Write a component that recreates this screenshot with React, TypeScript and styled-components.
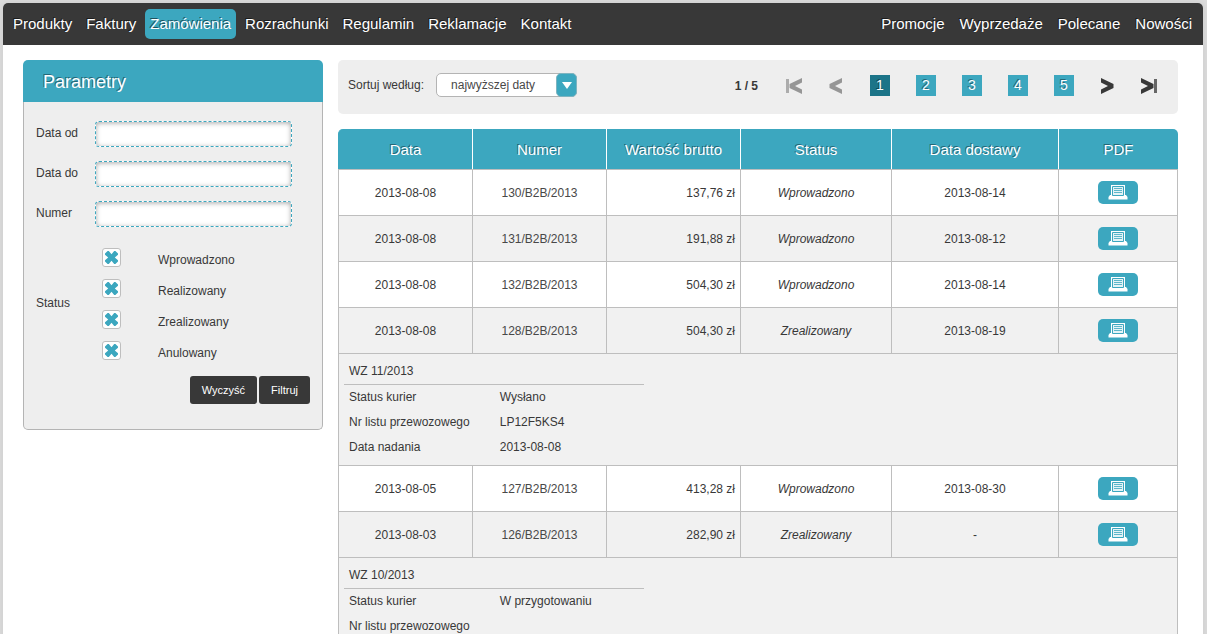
import React from "react";
import styled, { createGlobalStyle, css } from "styled-components";

const teal = "#3ca7bf";
const dark = "#383838";
const line = "#bebebe";

const GlobalStyle = createGlobalStyle`
  *, *::before, *::after { box-sizing: border-box; }
  html { scrollbar-width: none; }
  body {
    margin: 0;
    background: #dcdcdc;
    color: #383838;
    font-family: "Liberation Sans", Arial, sans-serif;
    font-size: 12px;
    line-height: 16px;
  }
  button, input, select { font: inherit; }
`;

const Page = styled.div`
  min-height: 100vh;
  padding: 3px 4px 0 3px;
  display: flex;
`;

const Sheet = styled.div`
  flex: 1;
  min-width: 0;
  background: #fff;
  border-radius: 5px 5px 0 0;
  box-shadow: 0 0 8px rgba(0, 0, 0, 0.08);
`;

const TopBar = styled.nav`
  display: flex;
  justify-content: space-between;
  align-items: center;
  height: 42px;
  padding: 0 6px 0 5px;
  background: ${dark};
  border-radius: 5px 5px 0 0;
`;

const MenuList = styled.ul<{ $gap: number }>`
  display: flex;
  gap: ${(p) => p.$gap}px;
  margin: 0;
  padding: 0;
  list-style: none;
`;

const MenuLink = styled.a<{ $active?: boolean }>`
  display: block;
  padding: 0 5px;
  border-radius: 5px;
  color: #fff;
  font-size: 15px;
  line-height: 30px;
  text-decoration: none;
  text-shadow: -1px -1px 0 rgba(0, 0, 0, 0.5);
  white-space: nowrap;
  ${(p) => p.$active && css`background: ${teal};`}
`;

const Content = styled.div`
  display: flex;
  align-items: flex-start;
  gap: 15px;
  padding: 15px 25px 0 20px;
`;

const Panel = styled.form`
  flex: none;
  width: 300px;
`;

const PanelTitle = styled.h2`
  margin: 0;
  padding: 2px 20px 0;
  background: ${teal};
  border-radius: 5px 5px 0 0;
  color: #fff;
  font-size: 18px;
  font-weight: normal;
  line-height: 40px;
  text-shadow: -1px -1px 0 rgba(0, 0, 0, 0.4);
`;

const PanelBody = styled.div`
  padding: 19px 12px 25px;
  background: #eee;
  border: 1px solid #b4b4b4;
  border-top: 0;
  border-radius: 0 0 5px 5px;
`;

const Field = styled.div`
  display: flex;
  height: 40px;
  align-items: flex-start;
`;

const FieldLabel = styled.label`
  width: 59px;
  line-height: 24px;
`;

const TextBox = styled.input`
  width: 197px;
  height: 26px;
  padding: 0 6px;
  background: #fff;
  border: 1px dashed ${teal};
  border-radius: 4px;
  box-shadow: inset 0 1px 5px rgba(0, 0, 0, 0.35);
  outline: none;
`;

const StatusGroup = styled.div`
  display: flex;
  align-items: center;
  padding-top: 7px;
`;

const StatusLabel = styled.span`
  width: 66px;
  padding-bottom: 14px;
`;

const StatusOptions = styled.div`
  flex: 1;
`;

const Option = styled.label`
  display: flex;
  align-items: flex-start;
  gap: 37px;
  height: 31px;
  line-height: 24px;
`;

const Tick = styled.span`
  display: grid;
  width: 19px;
  height: 19px;
  & > * { grid-area: 1 / 1; }
  svg { display: none; place-self: center; pointer-events: none; }
  input:checked + svg { display: block; }
`;

const TickBox = styled.input`
  appearance: none;
  width: 19px;
  height: 19px;
  margin: 0;
  background: #fff;
  border: 1px solid ${line};
  border-radius: 3px;
`;

const Actions = styled.div`
  display: flex;
  justify-content: flex-end;
  gap: 2px;
  padding-top: 4px;
`;

const DarkButton = styled.button`
  height: 28px;
  padding: 0 12px;
  background: ${dark};
  border: 0;
  border-radius: 3px;
  color: #fff;
  font-size: 11px;
`;

const Main = styled.main`
  flex: 1;
  min-width: 0;
`;

const Toolbar = styled.div`
  display: flex;
  align-items: center;
  justify-content: space-between;
  height: 54px;
  margin-bottom: 15px;
  padding: 0 20px 4px 10px;
  background: #eee;
  border-radius: 5px;
`;

const Sort = styled.div`
  display: flex;
  align-items: center;
  gap: 12px;
  line-height: 18px;
`;

const SelectFrame = styled.div`
  display: grid;
  width: 141px;
  height: 24px;
  & > * { grid-area: 1 / 1; }
`;

const Select = styled.select`
  appearance: none;
  width: 100%;
  height: 24px;
  padding: 0 24px 0 14px;
  background: #fff;
  border: 1px solid #b4b4b4;
  border-radius: 5px;
  color: #484848;
`;

const SelectArrow = styled.span`
  justify-self: end;
  align-self: center;
  display: grid;
  place-items: center;
  width: 21px;
  height: 24px;
  background: ${teal};
  border: 1px solid #7db4c0;
  border-radius: 5px;
  pointer-events: none;
`;

const Pager = styled.div`
  display: flex;
  align-items: center;
  padding-top: 1px;
`;

const PageCount = styled.strong`
  margin-right: 27px;
`;

const ArrowButton = styled.button<{ $gap: number }>`
  display: block;
  width: 20px;
  height: 20px;
  margin-right: ${(p) => p.$gap}px;
  padding: 0;
  background: none;
  border: 0;
  color: ${dark};
  &:disabled { color: #969696; }
  svg { display: block; }
`;

const PageList = styled.div`
  display: flex;
  gap: 26px;
  margin-right: 24px;
`;

const PageButton = styled.button<{ $current?: boolean }>`
  width: 20px;
  height: 21px;
  padding: 0;
  background: ${(p) => (p.$current ? "#1c7488" : teal)};
  border: 0;
  color: #fff;
  font-size: 14px;
  line-height: 21px;
  text-shadow: -1px -1px 0 rgba(0, 0, 0, 0.4);
`;

const Orders = styled.table`
  width: 100%;
  table-layout: fixed;
  border-collapse: separate;
  border-spacing: 0;
`;

const HeadCell = styled.th`
  height: 40px;
  padding: 2px 0 0;
  background: ${teal};
  border-left: 1px solid #fff;
  color: #fff;
  font-size: 15px;
  font-weight: normal;
  text-shadow: -1px -1px 0 rgba(0, 0, 0, 0.4);
  &:first-child { border-left-color: ${teal}; border-top-left-radius: 5px; }
  &:last-child { border-top-right-radius: 5px; }
`;

const Row = styled.tr<{ $shaded?: boolean }>`
  background: ${(p) => (p.$shaded ? "#f1f1f1" : "#fff")};
`;

const Cell = styled.td<{ $align?: string; $italic?: boolean }>`
  height: 46px;
  padding: 0 5px;
  border-top: 1px solid ${line};
  border-left: 1px solid ${line};
  text-align: ${(p) => p.$align ?? "center"};
  font-style: ${(p) => (p.$italic ? "italic" : "normal")};
  &:last-child { border-right: 1px solid ${line}; }
`;

const OrderLink = styled.a`
  color: #484848;
  text-decoration: none;
`;

const PrintButton = styled.button`
  display: grid;
  place-items: center;
  width: 40px;
  height: 23px;
  margin: 0 auto;
  padding: 0;
  background: ${teal};
  border: 0;
  border-radius: 5px;
`;

const DetailCell = styled(Cell)`
  height: 112px;
  padding: 4px 5px 5px;
  text-align: left;
  vertical-align: top;
`;

const DetailTitle = styled.div`
  width: 300px;
  padding: 0 5px;
  border-bottom: 1px solid ${line};
  line-height: 26px;
`;

const DetailList = styled.dl`
  display: grid;
  grid-template-columns: max-content auto;
  grid-auto-rows: 25px;
  column-gap: 30px;
  justify-content: start;
  margin: 0;
  padding: 0 5px;
  line-height: 25px;
  dt, dd { margin: 0; }
`;

const Cross = () => (
  <svg width="15" height="15" viewBox="0 0 15 15" aria-hidden="true">
    <path
      d="M3.6 1H4.8L7.5 4.2 10.2 1H11.4L14 3.6V4.8L10.8 7.5 14 10.2V11.4L11.4 14H10.2L7.5 10.8 4.8 14H3.6L1 11.4V10.2L4.2 7.5 1 4.8V3.6Z"
      fill={teal}
    />
  </svg>
);

const Printer = () => (
  <svg width="20" height="15" viewBox="0 0 20 15" aria-hidden="true">
    <path d="M3 0H17V10H18L19.5 12V14.5H0.5V12L2 10H3Z" fill="#fff" />
    <path d="M4.5 1.5H15.5V10.5H4.5Z" fill="#e4f3f6" stroke={teal} />
    <path d="M6 3.5H14M6 5.5H14M6 7.5H14" stroke={teal} strokeOpacity="0.8" />
  </svg>
);

type ArrowKind = "first" | "prev" | "next" | "last";

const Arrow = ({ kind }: { kind: ArrowKind }) => {
  const flip = kind === "first" || kind === "prev";
  return (
    <svg width="20" height="20" viewBox="0 0 20 20" aria-hidden="true">
      <g transform={flip ? "matrix(-1 0 0 1 20 0)" : undefined}>
        <path d="M3 2 15.5 8V12L3 18V13.5L10 10 3 6.5Z" fill="currentColor" />
        {(kind === "first" || kind === "last") && (
          <path d="M16 3H19V17H16Z" fill="currentColor" opacity="0.75" />
        )}
      </g>
    </svg>
  );
};

const leftMenu = ["Produkty", "Faktury", "Zamówienia", "Rozrachunki", "Regulamin", "Reklamacje", "Kontakt"];
const rightMenu = ["Promocje", "Wyprzedaże", "Polecane", "Nowości"];
const fields = [
  { id: "date-from", label: "Data od" },
  { id: "date-to", label: "Data do" },
  { id: "number", label: "Numer" },
];
const statuses = ["Wprowadzono", "Realizowany", "Zrealizowany", "Anulowany"];
const columns = [
  { name: "Data", width: 134 },
  { name: "Numer", width: 134 },
  { name: "Wartość brutto", width: 134 },
  { name: "Status", width: 151 },
  { name: "Data dostawy", width: 167 },
  { name: "PDF", width: 120 },
];

interface Order {
  date: string;
  number: string;
  value: string;
  status: string;
  delivery: string;
  shipment?: { title: string; items: [string, string][] };
}

const orders: Order[] = [
  { date: "2013-08-08", number: "130/B2B/2013", value: "137,76 zł", status: "Wprowadzono", delivery: "2013-08-14" },
  { date: "2013-08-08", number: "131/B2B/2013", value: "191,88 zł", status: "Wprowadzono", delivery: "2013-08-12" },
  { date: "2013-08-08", number: "132/B2B/2013", value: "504,30 zł", status: "Wprowadzono", delivery: "2013-08-14" },
  {
    date: "2013-08-08", number: "128/B2B/2013", value: "504,30 zł", status: "Zrealizowany", delivery: "2013-08-19",
    shipment: {
      title: "WZ 11/2013",
      items: [["Status kurier", "Wysłano"], ["Nr listu przewozowego", "LP12F5KS4"], ["Data nadania", "2013-08-08"]],
    },
  },
  { date: "2013-08-05", number: "127/B2B/2013", value: "413,28 zł", status: "Wprowadzono", delivery: "2013-08-30" },
  {
    date: "2013-08-03", number: "126/B2B/2013", value: "282,90 zł", status: "Zrealizowany", delivery: "-",
    shipment: {
      title: "WZ 10/2013",
      items: [["Status kurier", "W przygotowaniu"], ["Nr listu przewozowego", ""]],
    },
  },
];

const Menu = ({ items, gap }: { items: string[]; gap: number }) => (
  <MenuList $gap={gap}>
    {items.map((item) => (
      <li key={item}>
        <MenuLink href="#" $active={item === "Zamówienia"}>{item}</MenuLink>
      </li>
    ))}
  </MenuList>
);

export default function App() {
  return (
    <>
      <GlobalStyle />
      <Page>
        <Sheet>
          <TopBar>
            <Menu items={leftMenu} gap={4} />
            <Menu items={rightMenu} gap={5} />
          </TopBar>
          <Content>
            <Panel>
              <PanelTitle>Parametry</PanelTitle>
              <PanelBody>
                {fields.map((f) => (
                  <Field key={f.id}>
                    <FieldLabel htmlFor={f.id}>{f.label}</FieldLabel>
                    <TextBox id={f.id} type="text" />
                  </Field>
                ))}
                <StatusGroup role="group" aria-labelledby="status-label">
                  <StatusLabel id="status-label">Status</StatusLabel>
                  <StatusOptions>
                    {statuses.map((s) => (
                      <Option key={s}>
                        <Tick>
                          <TickBox type="checkbox" defaultChecked />
                          <Cross />
                        </Tick>
                        {s}
                      </Option>
                    ))}
                  </StatusOptions>
                </StatusGroup>
                <Actions>
                  <DarkButton type="reset">Wyczyść</DarkButton>
                  <DarkButton type="button">Filtruj</DarkButton>
                </Actions>
              </PanelBody>
            </Panel>
            <Main>
              <Toolbar>
                <Sort>
                  <label htmlFor="sort">Sortuj według:</label>
                  <SelectFrame>
                    <Select id="sort">
                      <option>najwyższej daty</option>
                    </Select>
                    <SelectArrow>
                      <svg width="10" height="8" viewBox="0 0 10 8" aria-hidden="true">
                        <path d="M0 1H10L5 8Z" fill="#fff" />
                      </svg>
                    </SelectArrow>
                  </SelectFrame>
                </Sort>
                <Pager>
                  <PageCount>1 / 5</PageCount>
                  <ArrowButton type="button" $gap={20} disabled aria-label="Pierwsza"><Arrow kind="first" /></ArrowButton>
                  <ArrowButton type="button" $gap={25} disabled aria-label="Poprzednia"><Arrow kind="prev" /></ArrowButton>
                  <PageList>
                    {[1, 2, 3, 4, 5].map((n) => (
                      <PageButton key={n} type="button" $current={n === 1}>{n}</PageButton>
                    ))}
                  </PageList>
                  <ArrowButton type="button" $gap={20} aria-label="Następna"><Arrow kind="next" /></ArrowButton>
                  <ArrowButton type="button" $gap={0} aria-label="Ostatnia"><Arrow kind="last" /></ArrowButton>
                </Pager>
              </Toolbar>
              <Orders>
                <colgroup>
                  {columns.map((c) => <col key={c.name} width={c.width} />)}
                </colgroup>
                <thead>
                  <tr>{columns.map((c) => <HeadCell key={c.name} scope="col">{c.name}</HeadCell>)}</tr>
                </thead>
                <tbody>
                  {orders.map((o, i) => (
                    <React.Fragment key={o.number}>
                      <Row $shaded={i % 2 === 1}>
                        <Cell>{o.date}</Cell>
                        <Cell><OrderLink href="#">{o.number}</OrderLink></Cell>
                        <Cell $align="right">{o.value}</Cell>
                        <Cell $italic>{o.status}</Cell>
                        <Cell>{o.delivery}</Cell>
                        <Cell>
                          <PrintButton type="button" aria-label="PDF"><Printer /></PrintButton>
                        </Cell>
                      </Row>
                      {o.shipment && (
                        <Row $shaded>
                          <DetailCell colSpan={6}>
                            <DetailTitle>{o.shipment.title}</DetailTitle>
                            <DetailList>
                              {o.shipment.items.map(([term, value]) => (
                                <React.Fragment key={term}>
                                  <dt>{term}</dt>
                                  <dd>{value}</dd>
                                </React.Fragment>
                              ))}
                            </DetailList>
                          </DetailCell>
                        </Row>
                      )}
                    </React.Fragment>
                  ))}
                </tbody>
              </Orders>
            </Main>
          </Content>
        </Sheet>
      </Page>
    </>
  );
}
